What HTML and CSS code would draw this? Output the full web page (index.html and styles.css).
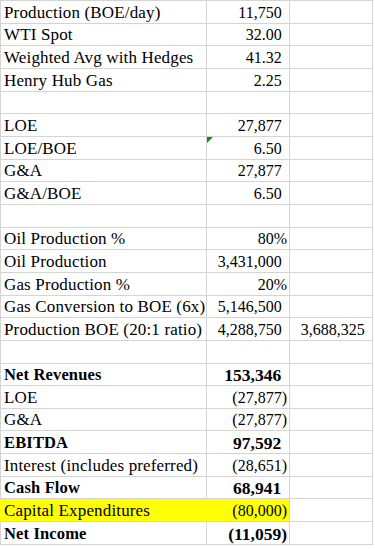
FILE: index.html
```html
<!DOCTYPE html>
<html lang="en">
<head>
    <meta charset="UTF-8">
    <meta name="viewport" content="width=device-width, initial-scale=1.0">
    <title>Production Model</title>
    <link rel="stylesheet" href="styles.css">
</head>
<body>
    <div class="sheet">
        <div class="row"><div class="label">Production (BOE/day)</div><div class="num">11,750<span class="pad">)</span></div><div class="num"></div></div>
        <div class="row"><div class="label">WTI Spot</div><div class="num">32.00<span class="pad">)</span></div><div class="num"></div></div>
        <div class="row"><div class="label">Weighted Avg with Hedges</div><div class="num">41.32<span class="pad">)</span></div><div class="num"></div></div>
        <div class="row"><div class="label">Henry Hub Gas</div><div class="num">2.25<span class="pad">)</span></div><div class="num"></div></div>
        <div class="row"><div class="label"></div><div class="num"></div><div class="num"></div></div>

        <div class="row"><div class="label">LOE</div><div class="num">27,877<span class="pad">)</span></div><div class="num"></div></div>
        <div class="row"><div class="label">LOE/BOE</div><div class="num flagged"><span class="flag"></span>6.50<span class="pad">)</span></div><div class="num"></div></div>
        <div class="row"><div class="label">G&amp;A</div><div class="num">27,877<span class="pad">)</span></div><div class="num"></div></div>
        <div class="row"><div class="label">G&amp;A/BOE</div><div class="num">6.50<span class="pad">)</span></div><div class="num"></div></div>
        <div class="row"><div class="label"></div><div class="num"></div><div class="num"></div></div>

        <div class="row"><div class="label">Oil Production %</div><div class="num">80%</div><div class="num"></div></div>
        <div class="row"><div class="label">Oil Production</div><div class="num">3,431,000<span class="pad">)</span></div><div class="num"></div></div>
        <div class="row"><div class="label">Gas Production %</div><div class="num">20%</div><div class="num"></div></div>
        <div class="row"><div class="label">Gas Conversion to BOE (6x)</div><div class="num">5,146,500<span class="pad">)</span></div><div class="num"></div></div>
        <div class="row"><div class="label">Production BOE (20:1 ratio)</div><div class="num">4,288,750<span class="pad">)</span></div><div class="num">3,688,325<span class="pad">)</span></div></div>
        <div class="row"><div class="label"></div><div class="num"></div><div class="num"></div></div>

        <div class="row total"><div class="label">Net Revenues</div><div class="num">153,346<span class="pad">)</span></div><div class="num"></div></div>
        <div class="row"><div class="label">LOE</div><div class="num">(27,877)</div><div class="num"></div></div>
        <div class="row"><div class="label">G&amp;A</div><div class="num">(27,877)</div><div class="num"></div></div>
        <div class="row total"><div class="label">EBITDA</div><div class="num">97,592<span class="pad">)</span></div><div class="num"></div></div>
        <div class="row"><div class="label">Interest (includes preferred)</div><div class="num">(28,651)</div><div class="num"></div></div>
        <div class="row total"><div class="label">Cash Flow</div><div class="num">68,941<span class="pad">)</span></div><div class="num"></div></div>
        <div class="row highlight"><div class="label">Capital Expenditures</div><div class="num">(80,000)</div><div class="num"></div></div>
        <div class="row total"><div class="label">Net Income</div><div class="num">(11,059)</div><div class="num"></div></div>
    </div>
</body>
</html>
```

FILE: styles.css
```css
body {
    margin: 0;
    background: #FFFFFF;
    font-family: "Liberation Serif", "Times New Roman", serif;
    color: #000000;
}
.sheet {
    display: grid;
    gap: 1px;
    padding: 1px;
    width: max-content;
    background: #D4D4D4;
}
.row {
    display: grid;
    grid-template-columns: 205px 82px 82px;
    gap: 1px;
    height: 21.667px;
}
.row > div {
    background: #FFFFFF;
    display: flex;
    align-items: flex-end;
    line-height: 20px;
    white-space: nowrap;
    overflow: hidden;
}
.label {
    padding-left: 3px;
    font-size: 17px;
    letter-spacing: 0.15px;
}
.num {
    justify-content: flex-end;
    padding-right: 2px;
    font-size: 16px;
}
.pad {
    visibility: hidden;
}
.total .label {
    font-weight: 700;
    font-size: 16.5px;
}
.total .num {
    font-weight: 700;
    font-size: 17.5px;
}
.highlight > .label {
    background: #FFFF00;
    margin-left: -1px;
    margin-right: -1px;
    padding-left: 4px;
}
.highlight > .num:nth-child(2) {
    background: #FFFF00;
}
.flagged {
    position: relative;
}
.flag {
    position: absolute;
    top: 0;
    left: 0;
    width: 0;
    height: 0;
    border-top: 6px solid #168A16;
    border-right: 6px solid transparent;
}
```
